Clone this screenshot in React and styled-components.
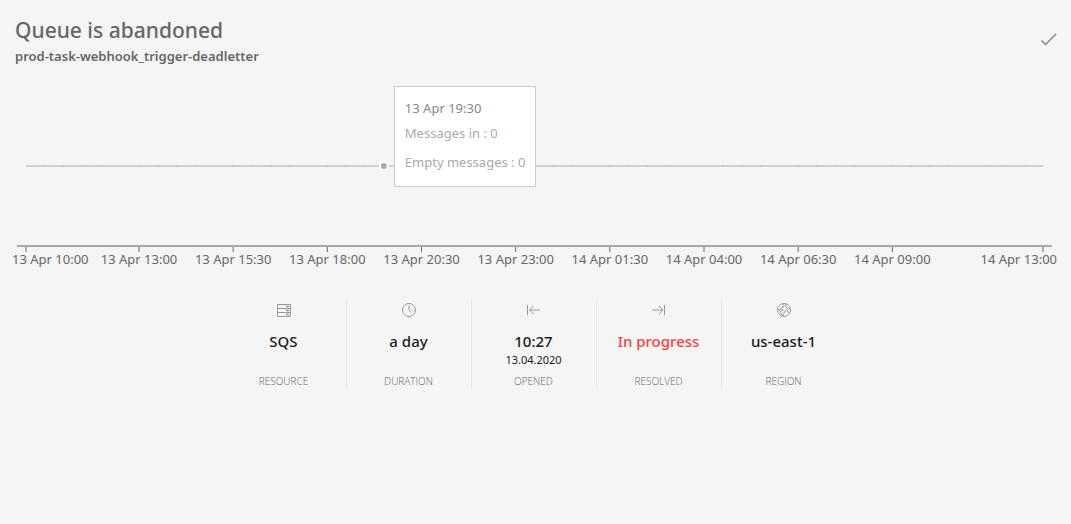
import React from "react";
import styled, { createGlobalStyle } from "styled-components";

const GlobalStyle = createGlobalStyle`
  * { box-sizing: border-box; }
  body {
    margin: 0;
    background: #f5f5f5;
    color: #666;
    font-family: "Segoe UI", "Noto Sans", "Open Sans", sans-serif;
  }
`;

const Page = styled.main`
  padding: 16px 14px 16px 15px;
`;

const Header = styled.header`
  display: flex;
  justify-content: space-between;
  align-items: center;
`;

const Title = styled.h1`
  margin: 0;
  font-size: 21px;
  line-height: 28px;
  font-weight: 500;
  color: #666;
`;

const QueueName = styled.p`
  margin: 3px 0 0;
  font-size: 13px;
  line-height: 18px;
  font-weight: 600;
`;

const ResolveButton = styled.button`
  display: flex;
  padding: 0;
  border: 0;
  background: none;
  color: #888;
  cursor: pointer;
`;

const ChartArea = styled.section`
  position: relative;
  height: 180px;
  margin: 20px 14px 0 11px;
`;

const ChartSvg = styled.svg`
  display: block;
  width: 100%;
  height: 100%;
  overflow: visible;
`;

const TickLabel = styled.text`
  font-size: 13px;
  fill: #666;
`;

const Tooltip = styled.div`
  position: absolute;
  top: 1px;
  margin-left: 10px;
  padding: 11px 10px 9px;
  border: 1px solid #ccc;
  background: #fff;
  font-size: 13px;
  line-height: 21px;
  white-space: nowrap;
  color: #aaa;
`;

const TooltipTitle = styled.p`
  margin: 0;
  color: #888;
`;

const TooltipList = styled.ul`
  list-style: none;
  margin: 0;
  padding: 0;
`;

const TooltipItem = styled.li`
  padding: 4px 0;
`;

const Stats = styled.dl`
  display: flex;
  justify-content: center;
  margin: 34px 0 0;
  padding-right: 4px;
`;

const Stat = styled.div`
  display: flex;
  flex-direction: column;
  align-items: center;
  width: 125px;
  height: 90px;
  padding-top: 1px;
  border-right: 1px solid #e6e6e6;
  &:last-child { border-right-color: transparent; }
`;

const StatLabel = styled.dt`
  order: 3;
  margin-top: auto;
  font-family: "Open Sans", sans-serif;
  font-size: 10px;
  line-height: 16px;
  font-weight: 300;
  color: #666;
  text-transform: uppercase;
`;

const StatIcon = styled.svg`
  width: 20px;
  height: 20px;
  color: #999;
`;

const StatValue = styled.dd`
  margin: 10px 0 0;
  font-size: 15px;
  line-height: 22px;
  font-weight: 500;
  text-align: center;
  color: ${(p) => (p.$alert ? "#ff4040" : "#1a1a1a")};
`;

const StatDate = styled.span`
  display: block;
  font-size: 11px;
  line-height: 16px;
  font-weight: 400;
`;

const STEPS = 54;
const at = (step) => `${(step / STEPS) * 100}%`;

const ticks = [
  { step: 0, label: "13 Apr 10:00", anchor: "start", dx: -14 },
  { step: 6, label: "13 Apr 13:00" },
  { step: 11, label: "13 Apr 15:30" },
  { step: 16, label: "13 Apr 18:00" },
  { step: 21, label: "13 Apr 20:30" },
  { step: 26, label: "13 Apr 23:00" },
  { step: 31, label: "14 Apr 01:30" },
  { step: 36, label: "14 Apr 04:00" },
  { step: 41, label: "14 Apr 06:30" },
  { step: 46, label: "14 Apr 09:00" },
  { step: 54, label: "14 Apr 13:00", anchor: "end", dx: 14 },
];

const segments = Array.from({ length: STEPS - 1 }, (_, i) => i + 1);
const HOVERED = 19;

const icons = {
  resource: (
    <>
      <path d="M3.5 4.5h13v12h-13zM3.5 8.5h13M3.5 12.5h13" />
      <path d="M12 6.5h3M12 10.5h3M12 14.5h3" strokeWidth="1.5" />
    </>
  ),
  duration: (
    <>
      <circle cx="10" cy="10" r="6.5" />
      <path d="M10 5.5V10l2 2.5" />
    </>
  ),
  opened: <path d="M3.5 5v10M5.5 10h10.5M9.5 6l-4 4 4 4" />,
  resolved: <path d="M15.5 5v10M3.5 10h10.500M10 6l4 4-4 4" />,
  region: (
    <>
      <circle cx="10" cy="10" r="6.5" />
      <path d="M8.5 3.8l1.500 1.700-1 2-2.500 1 .5 1.500h2.500l1.500 1.500-1.500 2-.5 2.500M3.700 9l2.800 2 .5 2 1.200 3M12.500 4l-1 2 1.500 2.500M16.400 9.500l-1.900-1.500-1.500 1.500.5 2.500 1.500.5" />
    </>
  ),
};

const stats = [
  { icon: "resource", value: "SQS", label: "Resource" },
  { icon: "duration", value: "a day", label: "Duration" },
  { icon: "opened", value: "10:27", date: "13.04.2020", label: "Opened" },
  { icon: "resolved", value: "In progress", label: "Resolved", alert: true },
  { icon: "region", value: "us-east-1", label: "Region" },
];

function MessagesChart() {
  return (
    <ChartArea aria-label="Messages over time">
      <ChartSvg>
        <line x1="0" x2="100%" y1="81" y2="81" stroke="#d0d0d0" strokeWidth="2" />
        {segments.map((s) => (
          <line key={s} x1={at(s)} x2={at(s)} y1="80" y2="82" stroke="#c2c2c2" strokeWidth={s % 5 ? 1 : 0} />
        ))}
        <svg x={at(HOVERED)} y="81" overflow="visible">
          <circle r="4" fill="#aaa" stroke="#fff" strokeWidth="2" />
        </svg>
        {ticks.map((t) => (
          <g key={t.step}>
            <line x1={at(t.step)} x2={at(t.step)} y1="162" y2="167" stroke="#666" />
            <TickLabel x={at(t.step)} dx={t.dx || 0} y="179" textAnchor={t.anchor || "middle"}>
              {t.label}
            </TickLabel>
          </g>
        ))}
        <svg x="0" y="161" overflow="visible">
          <line x1="-9" x2="0" stroke="#aaa" strokeWidth="2" />
        </svg>
        <line x1="0" x2="100%" y1="161" y2="161" stroke="#aaa" strokeWidth="2" />
        <svg x="100%" y="161" overflow="visible">
          <line x1="0" x2="9" stroke="#aaa" strokeWidth="2" />
        </svg>
      </ChartSvg>
      <Tooltip role="tooltip" style={{ left: at(HOVERED) }}>
        <TooltipTitle>13 Apr 19:30</TooltipTitle>
        <TooltipList>
          <TooltipItem>Messages in : 0</TooltipItem>
          <TooltipItem>Empty messages : 0</TooltipItem>
        </TooltipList>
      </Tooltip>
    </ChartArea>
  );
}

export default function App() {
  return (
    <>
      <GlobalStyle />
      <Page>
        <Header>
          <div>
            <Title>Queue is abandoned</Title>
            <QueueName>prod-task-webhook_trigger-deadletter</QueueName>
          </div>
          <ResolveButton aria-label="Mark as resolved">
            <svg width="16" height="16" viewBox="0 0 16 16" fill="none" stroke="currentColor" strokeWidth="1.5">
              <path d="M.5 7.500l4 4L15 1" />
            </svg>
          </ResolveButton>
        </Header>
        <MessagesChart />
        <Stats>
          {stats.map((s) => (
            <Stat key={s.label}>
              <StatLabel>{s.label}</StatLabel>
              <StatIcon viewBox="0 0 20 20" fill="none" stroke="currentColor" aria-hidden="true">
                {icons[s.icon]}
              </StatIcon>
              <StatValue $alert={s.alert}>
                {s.value}
                {s.date && <StatDate>{s.date}</StatDate>}
              </StatValue>
            </Stat>
          ))}
        </Stats>
      </Page>
    </>
  );
}
